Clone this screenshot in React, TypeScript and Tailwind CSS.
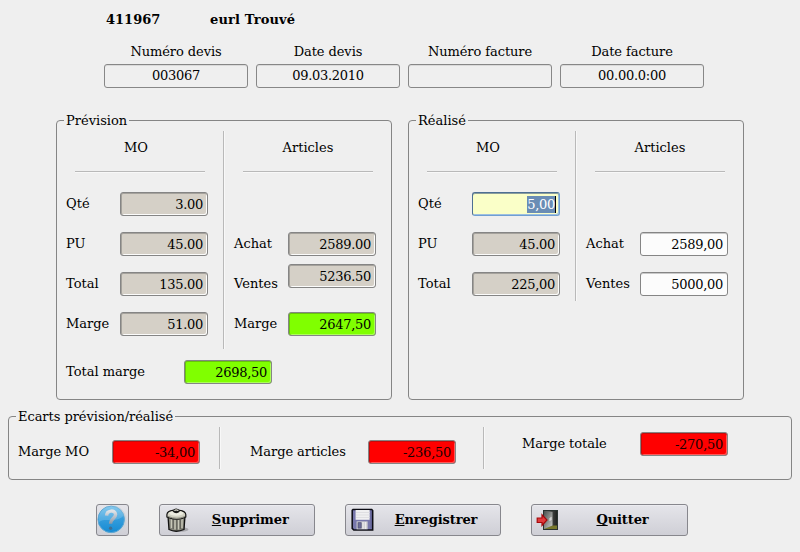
import type { ReactNode } from "react";

const TONES = {
  locked:
    "border-[#858585] bg-[#d5d0c7] text-black shadow-[inset_0_1px_0_#a5a29c,inset_1px_0_0_#a5a29c,inset_-1px_-1px_0_#fcfcfb]",
  editable: "border-[#858585] bg-[#fcfcfc] text-black shadow-[inset_0_1px_0_#c9c9c9]",
  gain: "border-[#858585] bg-[#80ff00] text-black shadow-[inset_0_1px_0_#67c40b,inset_1px_0_0_#67c40b,inset_-1px_-1px_0_#acff59]",
  loss: "border-[#858585] bg-[#ff0000] text-[#1c0000] shadow-[inset_0_1px_0_#c40b0b,inset_1px_0_0_#c40b0b,inset_-1px_-1px_0_#ff5959]",
  active:
    "border-t-[#4d6f93] border-l-[#4d6f93] border-b-[#6f9fd3] border-r-[#6f9fd3] bg-[#faffc8] shadow-[inset_0_1px_0_#8a9d9c,inset_-1px_-1px_0_#9dbfe0]",
};

type Tone = keyof typeof TONES;

function Field({ value, tone }: { value: string; tone: Tone }) {
  return (
    <div
      className={`flex h-6 w-[88px] shrink-0 items-center justify-end rounded-[3px] border pt-px tracking-[-0.27px] ${
        tone === "active" ? "pr-[3px]" : "pr-1"
      } ${TONES[tone]}`}
    >
      {tone === "active" ? (
        <span className="h-[17px] border-r border-black bg-[#6a8db5] leading-[17px] text-white">{value}</span>
      ) : (
        <span>{value}</span>
      )}
    </div>
  );
}

function Row({ label, value, tone, className = "" }: { label: string; value: string; tone: Tone; className?: string }) {
  return (
    <div className={`flex h-6 items-start justify-between ${className}`}>
      <span className="pt-1">{label}</span>
      <Field value={value} tone={tone} />
    </div>
  );
}

function Group({ title, className, children }: { title: string; className: string; children: ReactNode }) {
  return (
    <section className={`flex flex-col rounded-[4px] border border-[#858585] ${className}`}>
      <h2 className="-mt-2 ml-[7px] h-4 self-start bg-[#efefef] px-[2px]">{title}</h2>
      {children}
    </section>
  );
}

function Column({ title, titleClass, children }: { title: string; titleClass: string; children: ReactNode }) {
  return (
    <div className="flex w-[166px] flex-col pt-[9px] pr-[15px] pl-[9px]">
      <h3 className={`text-center ${titleClass}`}>{title}</h3>
      <div className="mt-[15px] ml-[9px] h-[2px] w-[130px] border-t border-[#b9b9b9] bg-[#f8f8f8]" />
      <div className="mt-[19px] flex flex-col gap-4">{children}</div>
    </div>
  );
}

function Divider({ className }: { className: string }) {
  return <div className={`w-[2px] shrink-0 border-l border-[#b9b9b9] bg-[#f8f8f8] ${className}`} />;
}

function Header({ label, value }: { label: string; value: string }) {
  return (
    <div className="flex w-36 flex-col items-center">
      <span className="tracking-[-0.08px]">{label}</span>
      <div className="mt-1 flex h-6 w-full items-start justify-center rounded-[3px] border border-[#878787] bg-[#efefef] pt-[3px] tracking-[-0.27px] shadow-[inset_0_1px_0_#dadada]">
        {value}
      </div>
    </div>
  );
}

function ActionButton({ label, icon, width }: { label: string; icon: ReactNode; width: string }) {
  return (
    <button
      className={`flex h-8 items-center rounded-[3px] border border-[#87878d] bg-linear-to-b from-[#e5e5ea] to-[#cfcfd6] pr-[10px] pl-1 font-bold tracking-[-0.1px] shadow-[inset_0_1px_0_#ececf0] ${width}`}
    >
      {icon}
      <span className="flex-1 pl-[8px] text-center">
        <span className="underline decoration-1 underline-offset-1 [text-decoration-skip-ink:none]">{label[0]}</span>
        {label.slice(1)}
      </span>
    </button>
  );
}

function HelpIcon() {
  return (
    <svg width="30" height="30" viewBox="0 0 30 30">
      <defs>
        <linearGradient id="helpFill" x1="0" y1="0" x2="0" y2="1">
          <stop offset="0" stopColor="#83c8ee" />
          <stop offset=".45" stopColor="#369edd" />
          <stop offset="1" stopColor="#168bd3" />
        </linearGradient>
        <linearGradient id="helpMark" x1="0" y1="0" x2="0" y2="1">
          <stop offset="0" stopColor="#dfe3e7" />
          <stop offset="1" stopColor="#8a98a8" />
        </linearGradient>
      </defs>
      <circle cx="15" cy="15" r="14.4" fill="#cdd3da" />
      <circle cx="14.2" cy="14.4" r="13.2" fill="url(#helpFill)" stroke="#5ba6d3" />
      <path d="M2 17C8 12 20 19 27 10A13 13 0 0 0 2 11Z" fill="#92cfed" opacity=".35" />
      <path
        d="M9.6 10.6C9.8 5.2 18.2 4.4 18.6 9.4C18.8 13 13.4 13.6 13.6 18.8"
        fill="none"
        stroke="url(#helpMark)"
        strokeWidth="3.4"
      />
      <circle cx="13.6" cy="23.2" r="1.7" fill="#3f6f94" />
    </svg>
  );
}

function TrashIcon() {
  return (
    <svg className="ml-[0.5px]" width="24" height="26" viewBox="0 0 24 26">
      <ellipse cx="14" cy="22.5" rx="9.5" ry="2.5" fill="#a9a9ae" />
      <path d="M3 9L4 22.5Q11 26 19 22.5L20 9Z" fill="#85857a" stroke="#111" strokeWidth="1.3" />
      <path d="M6.5 12V21M10 13V22.5M13.5 13V22.5M17 12V21" stroke="#c8c8b8" strokeWidth="1.4" />
      <path d="M8.2 12V22M11.8 13V23M15.3 13V22" stroke="#5c5c54" strokeWidth="1" />
      <path d="M1.9 7.5Q2.3 3.9 8 3.4Q11 0.6 14.5 3.4Q20.5 4.2 20.8 7.5V10Q12 14.5 1.9 10Z" fill="#d2d2c3" stroke="#111" strokeWidth="1.2" />
      <path d="M3 9.5Q12 13 20 9.5" fill="none" stroke="#8a8a7e" />
      <ellipse cx="11.3" cy="6.3" rx="7" ry="2.5" fill="#ecece0" />
      <path d="M7.5 4.4Q11 2 15 4.4Q11.3 8 7.5 4.4Z" fill="#1b1b19" />
      <path d="M9.5 3.4Q11.2 2.6 13 3.4" stroke="#e5e5da" fill="none" />
    </svg>
  );
}

function FloppyIcon() {
  return (
    <svg className="ml-px" width="23" height="24" viewBox="0 0 23 24">
      <path d="M2 1.5H20.7L21.7 2.5V22H2.8L1.2 20.4V2.3Z" fill="#7777ab" stroke="#0b0b12" strokeWidth="1.5" />
      <path d="M20.2 3V20.5" stroke="#5d5d90" strokeWidth="1.2" />
      <rect x="4.6" y="2" width="14" height="9.8" fill="#f0f0f1" />
      <path d="M5 4.5H18.5M5 7H18.5M5 9.5H18.5" stroke="#dfdfe2" />
      <rect x="5.6" y="13.4" width="11" height="7.9" fill="#d2d2d5" />
      <rect x="7" y="14.7" width="3.2" height="5.4" fill="#6b6c99" stroke="#4c4c70" strokeWidth=".7" />
      <path d="M12 14V21M14.5 14V21" stroke="#ebebed" />
    </svg>
  );
}

function ExitIcon() {
  return (
    <svg width="24" height="24" viewBox="0 0 24 24">
      <defs>
        <linearGradient id="doorway" x1="0" y1="0" x2="1" y2="0">
          <stop offset="0" stopColor="#777" />
          <stop offset="1" stopColor="#1d201e" />
        </linearGradient>
        <linearGradient id="doorLeaf" x1="0" y1="0" x2="1" y2="1">
          <stop offset="0" stopColor="#494d4b" />
          <stop offset="1" stopColor="#d0d2d0" />
        </linearGradient>
      </defs>
      <rect x="7.5" y="2.5" width="14" height="19" fill="url(#doorway)" stroke="#293331" />
      <path d="M8 21V20L17 17.5H21V21Z" fill="#77782c" />
      <path d="M8 3L16.5 4V17.5L8 21Z" fill="url(#doorLeaf)" />
      <path d="M14 10V13M15 9V12" stroke="#eee" strokeWidth=".9" />
      <path d="M1.2 10H6V6.8L11 12L6 17.5V14.5H1.2Z" fill="#e03a3c" stroke="#a5080b" strokeWidth="1.2" />
    </svg>
  );
}

export default function App() {
  return (
    <main className="flex h-[552px] w-[800px] flex-col bg-[#efefef] font-['DejaVu_Serif','Liberation_Serif',serif] text-[13px] leading-4 text-black">
      <div className="flex pt-3 pl-[106px] font-bold">
        <span className="w-[104px]">411967</span>
        <span className="tracking-[0.15px]">eurl Trouvé</span>
      </div>

      <div className="mt-4 flex gap-2 pl-[104px]">
        <Header label="Numéro devis" value="003067" />
        <Header label="Date devis" value="09.03.2010" />
        <Header label="Numéro facture" value="" />
        <Header label="Date facture" value="00.00.0:00" />
      </div>

      <div className="mt-8 flex gap-4 pl-14">
        <Group title="Prévision" className="h-[280px] w-[336px]">
          <div className="mt-[2px] flex h-[218px]">
            <Column title="MO" titleClass="pr-[2px]">
              <Row label="Qté" value="3.00" tone="locked" />
              <Row label="PU" value="45.00" tone="locked" />
              <Row label="Total" value="135.00" tone="locked" />
              <Row label="Marge" value="51.00" tone="locked" />
            </Column>
            <Divider className="h-[218px]" />
            <Column title="Articles" titleClass="pl-[6px]">
              <div className="h-6" />
              <Row label="Achat" value="2589.00" tone="locked" />
              <div className="flex h-6 items-start justify-between">
                <span className="pt-1">Ventes</span>
                <div className="-mt-2">
                  <Field value="5236.50" tone="locked" />
                </div>
              </div>
              <Row label="Marge" value="2647,50" tone="gain" />
            </Column>
          </div>
          <Row label="Total marge" value="2698,50" tone="gain" className="mt-[11px] ml-[9px] w-[206px]" />
        </Group>

        <Group title="Réalisé" className="h-[280px] w-[336px]">
          <div className="mt-[2px] flex h-[218px]">
            <Column title="MO" titleClass="pr-[2px]">
              <Row label="Qté" value="5,00" tone="active" />
              <Row label="PU" value="45.00" tone="locked" />
              <Row label="Total" value="225,00" tone="locked" />
            </Column>
            <Divider className="h-[170px]" />
            <Column title="Articles" titleClass="pl-[6px]">
              <div className="h-6" />
              <Row label="Achat" value="2589,00" tone="editable" />
              <Row label="Ventes" value="5000,00" tone="editable" />
            </Column>
          </div>
        </Group>
      </div>

      <Group title="Ecarts prévision/réalisé" className="mx-2 mt-4 h-16 tracking-[-0.05px]">
        <div className="mt-[2px] flex">
          <Row label="Marge MO" value="-34,00" tone="loss" className="mt-[13px] ml-[9px] w-[182px]" />
          <Divider className="ml-[19px] h-[42px]" />
          <Row label="Marge articles" value="-236,50" tone="loss" className="mt-[13px] ml-[29px] w-[206px]" />
          <Divider className="ml-[27px] h-[42px]" />
          <Row label="Marge totale" value="-270,50" tone="loss" className="mt-[5px] ml-[37px] w-[206px]" />
        </div>
      </Group>

      <div className="mt-6 flex pl-24">
        <button className="flex h-8 w-[33px] items-center rounded-[3px] border border-[#87878d] bg-linear-to-b from-[#e5e5ea] to-[#cfcfd6]">
          <HelpIcon />
        </button>
        <div className="ml-[30px] flex gap-[30px]">
          <ActionButton label="Supprimer" icon={<TrashIcon />} width="w-[156px]" />
          <ActionButton label="Enregistrer" icon={<FloppyIcon />} width="w-[156px]" />
          <ActionButton label="Quitter" icon={<ExitIcon />} width="w-[157px]" />
        </div>
      </div>
    </main>
  );
}
